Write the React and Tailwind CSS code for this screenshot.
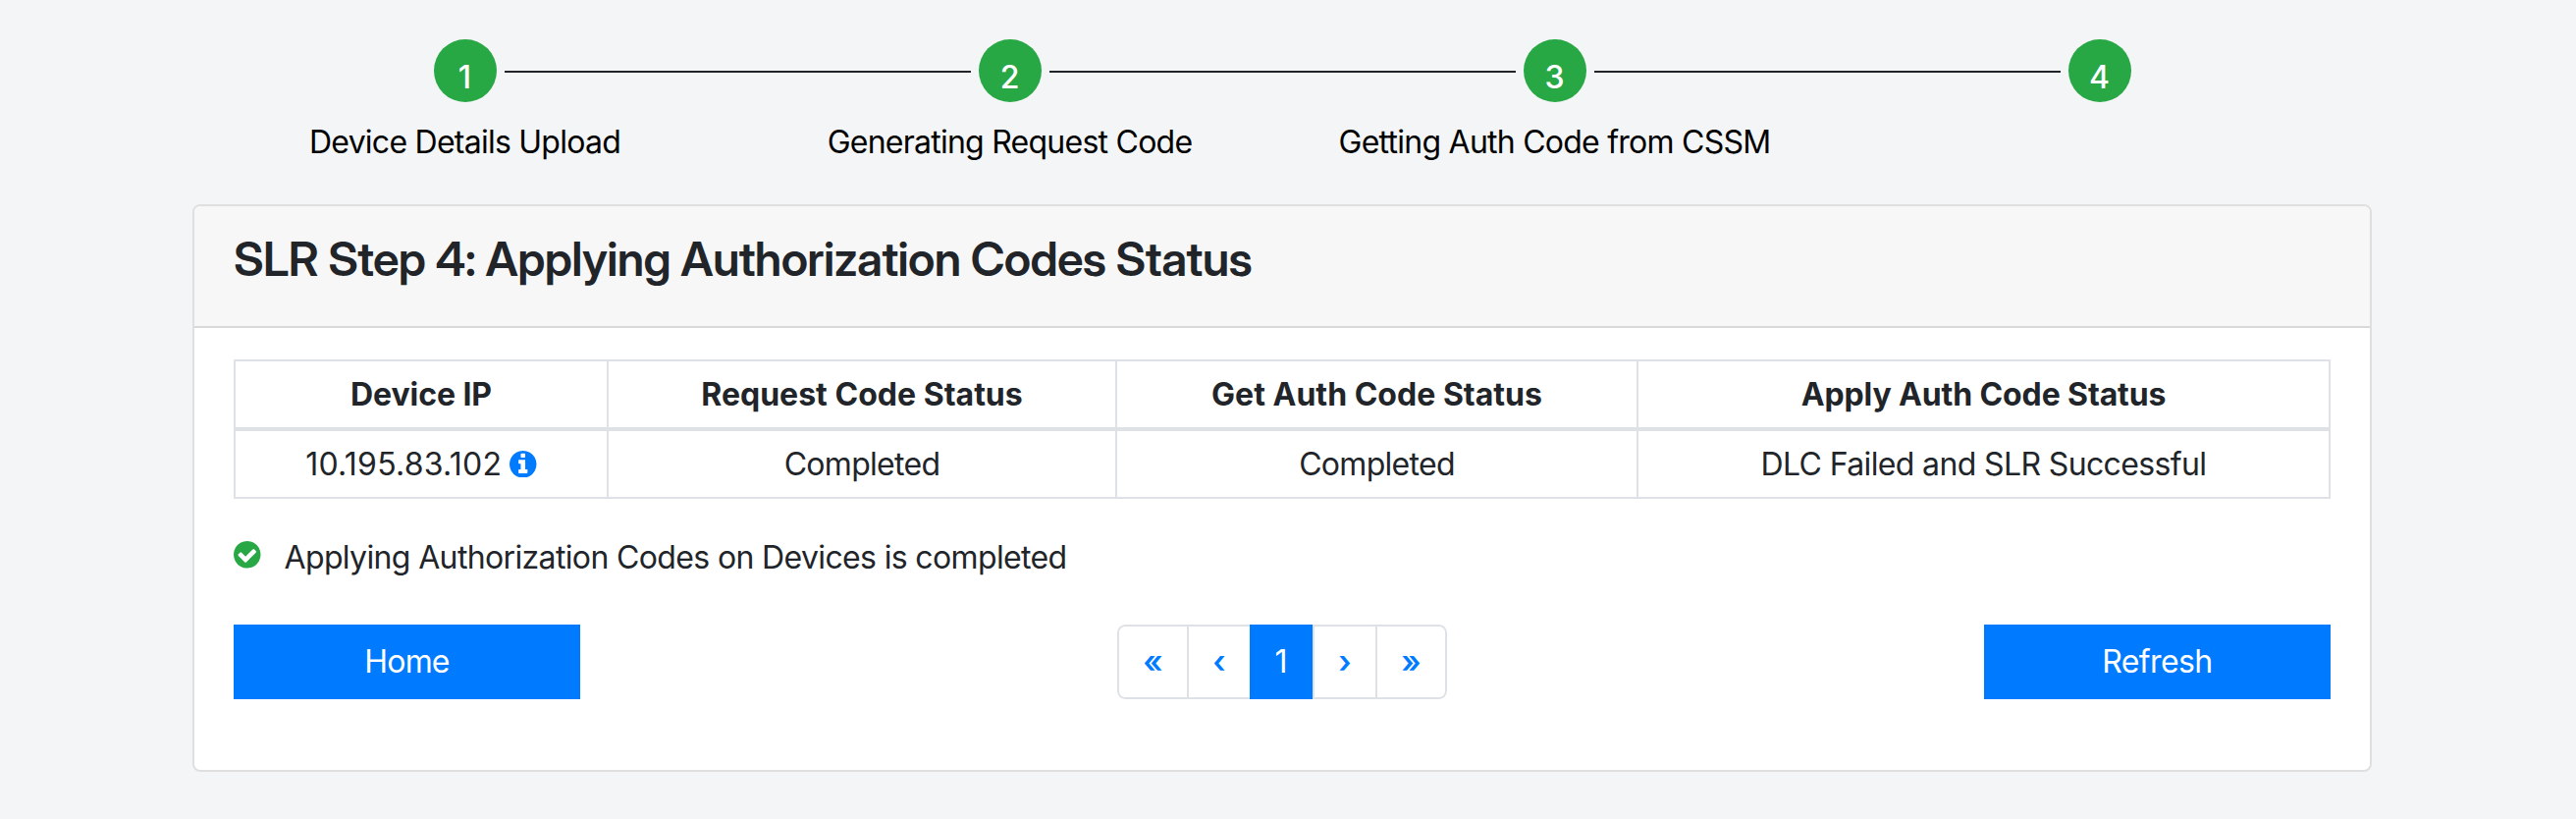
const steps = [
  { n: 1, label: 'Device Details Upload' },
  { n: 2, label: 'Generating Request Code' },
  { n: 3, label: 'Getting Auth Code from CSSM' },
  { n: 4, label: '' },
];

const columns = [
  { title: 'Device IP', width: 'w-[378px]', tracking: 'tracking-[-0.06px]' },
  { title: 'Request Code Status', width: 'w-[518px]', tracking: 'tracking-[0.02px]' },
  { title: 'Get Auth Code Status', width: 'w-[531px]', tracking: 'tracking-[0.02px]' },
  { title: 'Apply Auth Code Status', width: 'w-[705px]', tracking: 'tracking-[-0.12px]' },
];

const CIRCLE =
  'M1664 896q0 209-103 385.5t-279.5 279.5-385.5 103-385.5-103-279.5-279.5-103-385.5 103-385.5 279.5-279.5 385.5-103 385.5 103 279.5 279.5 103 385.5z';

function InfoIcon() {
  return (
    <svg viewBox="128 128 1536 1536" className="size-[27.5px] shrink-0 text-[#007bff]" fill="currentColor" fillRule="evenodd">
      <path
        d={`M1152 1376v-160q0-14-9-23t-23-9h-96v-512q0-14-9-23t-23-9h-320q-14 0-23 9t-9 23v160q0 14 9 23t23 9h96v320h-96q-14 0-23 9t-9 23v160q0 14 9 23t23 9h448q14 0 23-9t9-23zM1024 480v-160q0-14-9-23t-23-9h-192q-14 0-23 9t-9 23v160q0 14 9 23t23 9h192q14 0 23-9t9-23z${CIRCLE}`}
      />
    </svg>
  );
}

function CheckIcon() {
  return (
    <svg viewBox="128 128 1536 1536" className="mt-[7px] size-[27.5px] shrink-0 text-[#28a745]" fill="currentColor" fillRule="evenodd">
      <path
        d={`M1412 734q0-28-18-46l-91-90q-19-19-45-19t-45 19l-408 407-226-226q-19-19-45-19t-45 19l-91 90q-18 18-18 46 0 27 18 45l362 362q19 19 45 19 27 0 46-19l543-543q18-18 18-45z${CIRCLE}`}
      />
    </svg>
  );
}

function Stepper() {
  return (
    <div className="grid h-[168px] grid-cols-4 pt-10">
      {steps.map((s, i) => (
        <div key={s.n} className="flex flex-col items-center">
          <div className="flex w-full items-center gap-2">
            <div className={`mt-0.5 h-0.5 flex-1 ${i > 0 ? 'bg-[#212529]' : ''}`} />
            <div className="flex size-16 justify-center rounded-full bg-[#28a745] pt-[15px] font-medium leading-[48px] text-white">
              {s.n}
            </div>
            <div className={`mt-0.5 h-0.5 flex-1 ${i < steps.length - 1 ? 'bg-[#212529]' : ''}`} />
          </div>
          <div className="mt-[17px] whitespace-nowrap leading-[48px] tracking-[-0.75px] text-black">{s.label}</div>
        </div>
      ))}
    </div>
  );
}

function StatusTable() {
  return (
    <table className="w-[2136px] table-fixed border-separate border-spacing-0 border-2 border-[#dee2e6] text-center">
      <thead>
        <tr>
          {columns.map((c, i) => (
            <th
              key={c.title}
              className={`h-[71px] border-b-4 border-[#dee2e6] p-0 font-bold leading-[48px] ${c.width} ${c.tracking} ${i > 0 ? 'border-l-2' : ''}`}
            >
              {c.title}
            </th>
          ))}
        </tr>
      </thead>
      <tbody>
        <tr className="leading-[48px]">
          <td className="h-[67px] p-0">
            <div className="flex items-center justify-center gap-2">
              <span className="tracking-[0.25px]">10.195.83.102</span>
              <InfoIcon />
            </div>
          </td>
          <td className="border-l-2 border-[#dee2e6] p-0 tracking-[-0.7px]">Completed</td>
          <td className="border-l-2 border-[#dee2e6] p-0 tracking-[-0.7px]">Completed</td>
          <td className="border-l-2 border-[#dee2e6] p-0 tracking-[-0.63px]">DLC Failed and SLR Successful</td>
        </tr>
      </tbody>
    </table>
  );
}

function Pagination() {
  return (
    <nav className="flex h-[76px] w-[336px] overflow-hidden rounded-lg font-semibold text-[#007bff]">
      <button className="w-[73px] rounded-l-lg border-2 border-[#dee2e6]">«</button>
      <button className="w-[62px] border-y-2 border-[#dee2e6]">‹</button>
      <button className="w-16 bg-[#007bff] font-normal text-white">1</button>
      <button className="w-[66px] border-2 border-[#dee2e6]">›</button>
      <button className="w-[71px] rounded-r-lg border-2 border-l-0 border-[#dee2e6]">»</button>
    </nav>
  );
}

export default function App() {
  return (
    <div className="h-[834px] bg-[#f4f5f7] pl-[196px] font-['Inter',sans-serif] text-[32px] text-[#212529]">
      <div className="w-[2220px]">
        <Stepper />
        <section className="mt-10 h-[578px] overflow-hidden rounded-lg border-2 border-[#dfdfdf] bg-white">
          <header className="h-[124px] border-b-2 border-[#d9d9d9] bg-[#f7f7f7] pl-10 pt-[25px]">
            <h1 className="whitespace-nowrap font-['Inter_Display',Inter,sans-serif] text-5xl font-semibold leading-[58px] tracking-[-0.67px]">
              SLR Step 4: Applying Authorization Codes Status
            </h1>
          </header>
          <div className="px-10 pt-8">
            <StatusTable />
            <div className="mt-9 flex h-12 gap-6">
              <CheckIcon />
              <p className="leading-[48px] tracking-[-0.64px]">Applying Authorization Codes on Devices is completed</p>
            </div>
            <div className="mt-11 flex items-center justify-between">
              <button className="h-[76px] w-[353px] bg-[#007bff] tracking-[-0.8px] text-white">Home</button>
              <Pagination />
              <button className="h-[76px] w-[353px] bg-[#007bff] tracking-[-0.6px] text-white">Refresh</button>
            </div>
          </div>
        </section>
      </div>
    </div>
  );
}
